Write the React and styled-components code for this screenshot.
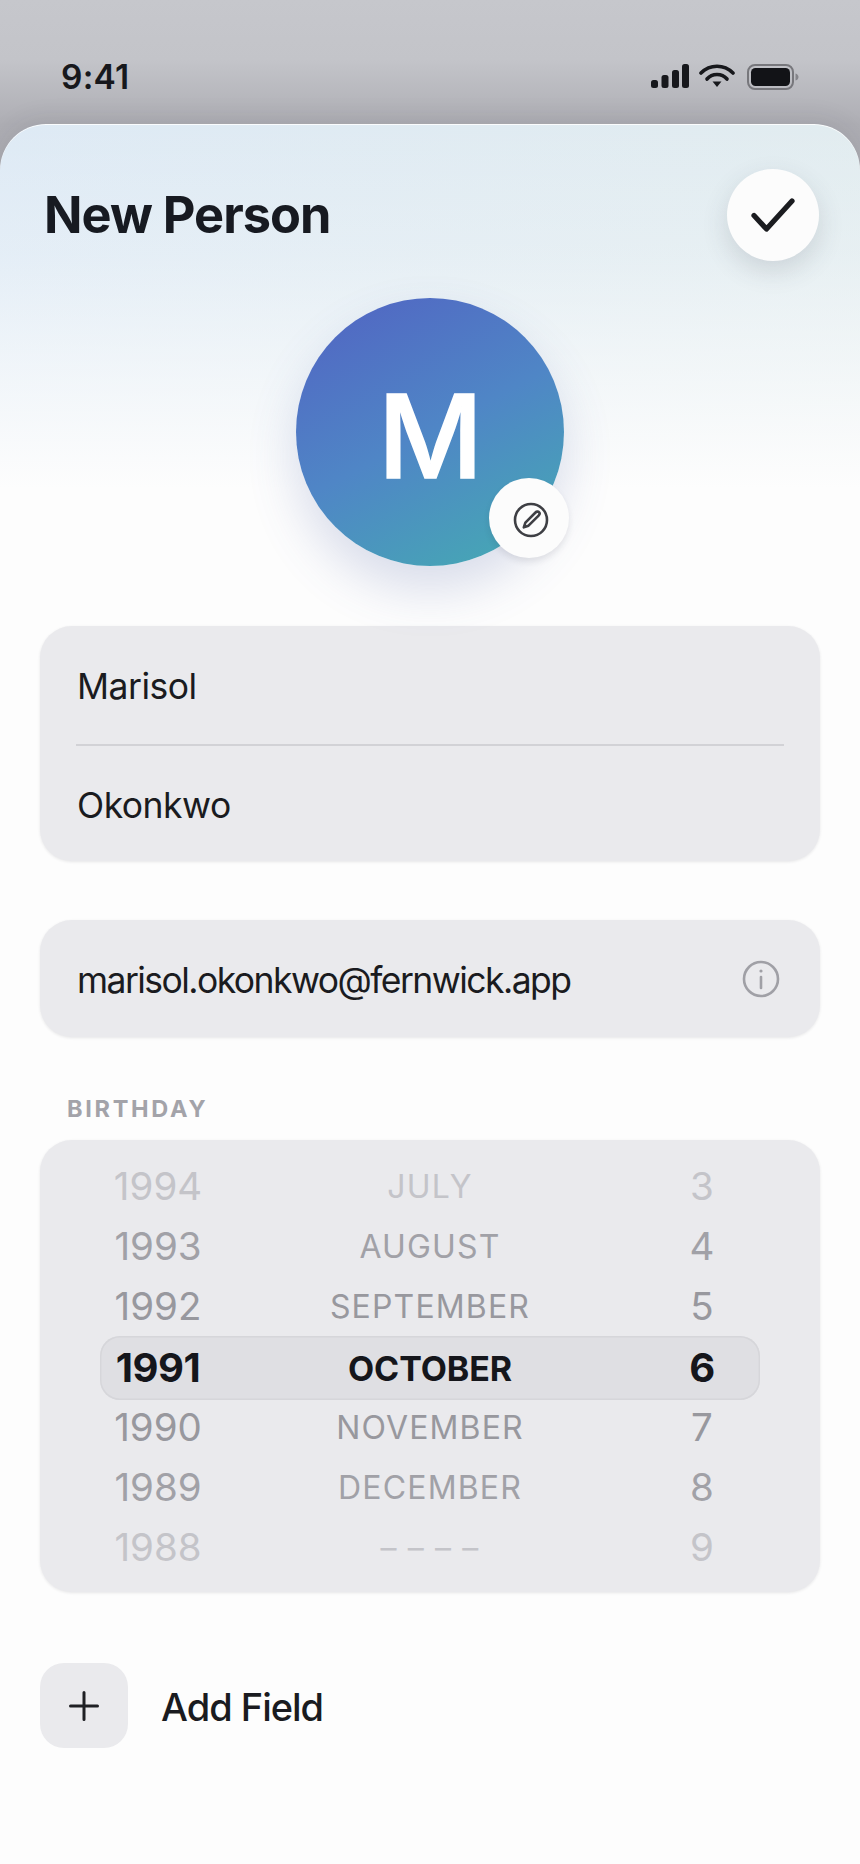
import React from 'react';
import styled, { createGlobalStyle } from 'styled-components';

const Global = createGlobalStyle`
  html, body { margin: 0; padding: 0; background: #fdfdfd; }
  body { font-family: Inter, "Noto Sans", sans-serif; -webkit-font-smoothing: antialiased; }
  #root { width: 860px; height: 1864px; overflow: hidden; }
`;
const Page = styled.div`
  width: 860px; height: 1864px; display: flex; flex-direction: column;
  background: linear-gradient(180deg, #c6c7cc 0px, #c3c4c9 60px, #aeaeb4 124px, #aaaab0 170px);
  overflow: hidden;
`;
const StatusBar = styled.div`
  height: 124px; flex: none; box-sizing: border-box; padding: 58px 61px 0 61px;
  display: flex; justify-content: space-between; align-items: flex-start; color: #17181c;
`;
const Time = styled.div`
  font-size: 33.5px; font-weight: 600; line-height: 36px; letter-spacing: 0.2px; margin-top: 1px;
`;
const StatusIcons = styled.div`
  display: flex; align-items: flex-start; gap: 12px; margin-top: 6px;
`;
const SignalSlot = styled.div`
  margin-left: 2px; margin-right: -2px; display: flex;
`;
const Sheet = styled.div`
  flex: 1; display: flex; flex-direction: column; box-sizing: border-box; padding: 44px 40px 0;
  border-radius: 46px 46px 0 0;
  background:
    linear-gradient(180deg, rgba(253,253,253,0) 0px, rgba(253,253,253,0.2) 130px, rgba(253,253,253,1) 365px),
    linear-gradient(100deg, #deeaf5 0%, #e3edee 100%);
  box-shadow: inset 0 1px 0 rgba(255,255,255,.85), 0 -6px 24px rgba(40,40,50,.08);
`;
const Header = styled.div`
  display: flex; justify-content: space-between; align-items: center; height: 93px;
  margin-right: 1px; padding-left: 4px;
`;
const Title = styled.h1`
  margin: 0; font-size: 50.5px; font-weight: 700; letter-spacing: -1px; color: #171a21; line-height: 60px;
`;
const RoundButton = styled.div`
  width: 92px; height: 92px; border-radius: 50%; background: #fcfcfc;
  display: flex; align-items: center; justify-content: center;
  box-shadow: 0 10px 26px rgba(60,70,80,.16);
`;
const AvatarWrap = styled.div`
  position: relative; width: 268px; height: 268px; margin: 37px auto 0;
`;
const Avatar = styled.div`
  width: 268px; height: 268px; border-radius: 50%; box-sizing: border-box; padding-top: 9px;
  display: flex; align-items: center; justify-content: center;
  background: linear-gradient(152deg, #5168c3 8%, #4f86c6 50%, #45aab3 96%);
  box-shadow: 0 24px 50px rgba(70,90,160,.2);
  color: #fff; font-size: 115px; font-weight: 500; line-height: 1; letter-spacing: -1px;
  -webkit-text-stroke: 1.5px #fff;
`;
const EditBadge = styled.div`
  position: absolute; right: -5px; bottom: 8px; width: 80px; height: 80px; border-radius: 50%;
  background: #fcfcfc; display: flex; align-items: center; justify-content: center;
  box-shadow: 0 4px 6px rgba(40,40,60,.1);
  svg { margin: 3px 0 0 4px; }
`;
const Card = styled.div`
  background: #eaeaed; border-radius: 32px; margin-top: ${p => p.$top}px;
  box-shadow: 0 1px 3px rgba(30,30,40,.1);
`;
const FieldRow = styled.div`
  height: ${p => p.$h}px; display: flex; align-items: center; justify-content: space-between;
  box-sizing: border-box; padding: 3px 40px 0 37px; font-size: 35.5px; color: #1a1b20;
  letter-spacing: ${p => (p.$tight ? '-1.55px' : '-0.5px')};
  svg { margin-top: -2px; }
`;
const Divider = styled.div`
  height: 2px; background: #d2d2d6; margin: 0 36px;
`;
const SectionLabel = styled.div`
  margin: 58px 0 0 27px; font-size: 23.5px; font-weight: 700; line-height: 27px;
  color: #a3a3a9; letter-spacing: 2.7px;
`;
const Picker = styled.div`
  margin-top: 18px; height: 452px; box-sizing: border-box; padding: 16px 60px 0;
  background: #eaeaed; border-radius: 32px;
  box-shadow: 0 1px 3px rgba(30,30,40,.1);
`;
const PickerRow = styled.div`
  height: ${p => (p.$selected ? 64 : 60)}px; margin: ${p => (p.$selected ? '0 0 -3px' : '0')};
  display: grid; grid-template-columns: 116px 1fr 116px; align-items: center; text-align: center;
  box-sizing: border-box; border-radius: 20px;
  color: ${p => p.$color};
  font-weight: ${p => (p.$selected ? 700 : 400)};
  background: ${p => (p.$selected ? '#dfdfe3' : 'transparent')};
  box-shadow: ${p => (p.$selected ? 'inset 0 0 0 1.5px #d6d6da' : 'none')};
`;
const Num = styled.div`
  font-size: ${p => (p.$selected ? 40 : 38.5)}px; letter-spacing: ${p => (p.$selected ? '-0.5px' : '0')};
  padding-bottom: 1px;
`;
const Month = styled.div`
  font-size: ${p => (p.$selected ? 34 : 32)}px; letter-spacing: ${p => (p.$selected ? '-0.1px' : '1.15px')};
`;
const AddRow = styled.div`
  display: flex; align-items: center; gap: 33px; margin-top: 71px;
`;
const AddBox = styled.div`
  width: 88px; height: 85px; border-radius: 24px; background: #eaeaed;
  display: flex; align-items: center; justify-content: center;
`;
const AddLabel = styled.div`
  font-size: 38px; font-weight: 500; color: #1a1b20; letter-spacing: -1px; line-height: 44px; padding-top: 2px;
`;

const SignalIcon = () => (
  <svg width="38" height="25" viewBox="0 0 38 25" fill="#17181c">
    <rect x="0" y="16" width="7" height="8" rx="2.5" />
    <rect x="10.5" y="11" width="7" height="13" rx="2.5" />
    <rect x="21" y="6" width="7" height="18" rx="2.5" />
    <rect x="31" y="0" width="7" height="24" rx="2.5" />
  </svg>
);
const WifiIcon = () => (
  <svg width="36" height="24" viewBox="0 0 36 24" fill="none" stroke="#17181c" strokeWidth="3.6" strokeLinecap="round">
    <path d="M2 9 C11 0 25 0 34 9" />
    <path d="M8 15 C13 9 23 9 28 15" />
    <path d="M13.5 17.5 L18 23 L22.5 17.5 Z" fill="#17181c" stroke="none" />
  </svg>
);
const BatteryIcon = () => (
  <svg width="52" height="26" viewBox="0 0 52 26" fill="none">
    <rect x="1" y="1" width="45" height="24" rx="7" stroke="#77777c" strokeWidth="2" />
    <rect x="4" y="4" width="39" height="18" rx="4.5" fill="#121317" />
    <path d="M48.5 9.5 C50.5 10 51.5 11.5 51.5 13 C51.5 14.5 50.5 16 48.5 16.5 Z" fill="#85858a" />
  </svg>
);
const CheckIcon = () => (
  <svg width="48" height="38" viewBox="0 0 48 38" fill="none" stroke="#1b1c20" strokeWidth="5.2" strokeLinecap="round" strokeLinejoin="round">
    <path d="M5 19.5 L17.5 33 L43 5" />
  </svg>
);
const EditIcon = () => (
  <svg width="36" height="36" viewBox="0 0 36 36" fill="none" stroke="#3e3f44" strokeWidth="2.6" strokeLinejoin="round" strokeLinecap="round">
    <circle cx="18" cy="18" r="16" />
    <path d="M22.5 10.5 C23.6 9.4 25.3 9.4 26 10.2 C26.8 11 26.7 12.5 25.6 13.6 L15.5 23.7 L10.8 25.3 L12.4 20.6 Z" />
  </svg>
);
const InfoIcon = () => (
  <svg width="38" height="38" viewBox="0 0 38 38" fill="none" stroke="#a0a0a6" strokeWidth="2.6" strokeLinecap="round">
    <circle cx="19" cy="19" r="17" />
    <path d="M19 17 V28" />
    <circle cx="19" cy="11" r="1.6" fill="#a0a0a6" stroke="none" />
  </svg>
);
const PlusIcon = () => (
  <svg width="30" height="30" viewBox="0 0 30 30" fill="none" stroke="#1f2024" strokeWidth="3" strokeLinecap="round">
    <path d="M15 1.5 V28.5 M1.5 15 H28.5" />
  </svg>
);

const rows = [
  ['1994', 'JULY', '3', '#c4c4c9'],
  ['1993', 'AUGUST', '4', '#a1a1a7'],
  ['1992', 'SEPTEMBER', '5', '#98989e'],
  ['1991', 'OCTOBER', '6', '#15161b', true],
  ['1990', 'NOVEMBER', '7', '#98989e'],
  ['1989', 'DECEMBER', '8', '#a1a1a7'],
  ['1988', '– – – –', '9', '#c4c4c9'],
];

export default function App() {
  return (
    <Page>
      <Global />
      <StatusBar>
        <Time>9:41</Time>
        <StatusIcons>
          <SignalSlot><SignalIcon /></SignalSlot>
          <WifiIcon />
          <BatteryIcon />
        </StatusIcons>
      </StatusBar>
      <Sheet>
        <Header>
          <Title>New Person</Title>
          <RoundButton><CheckIcon /></RoundButton>
        </Header>
        <AvatarWrap>
          <Avatar>M</Avatar>
          <EditBadge><EditIcon /></EditBadge>
        </AvatarWrap>
        <Card $top={60}>
          <FieldRow $h={118}>Marisol</FieldRow>
          <Divider />
          <FieldRow $h={115}>Okonkwo</FieldRow>
        </Card>
        <Card $top={59}>
          <FieldRow $h={117} $tight>marisol.okonkwo@fernwick.app<InfoIcon /></FieldRow>
        </Card>
        <SectionLabel>BIRTHDAY</SectionLabel>
        <Picker>
          {rows.map(([y, m, d, c, sel]) => (
            <PickerRow key={y} $color={c} $selected={sel}>
              <Num $selected={sel}>{y}</Num>
              <Month $selected={sel}>{m}</Month>
              <Num $selected={sel}>{d}</Num>
            </PickerRow>
          ))}
        </Picker>
        <AddRow>
          <AddBox><PlusIcon /></AddBox>
          <AddLabel>Add Field</AddLabel>
        </AddRow>
      </Sheet>
    </Page>
  );
}
